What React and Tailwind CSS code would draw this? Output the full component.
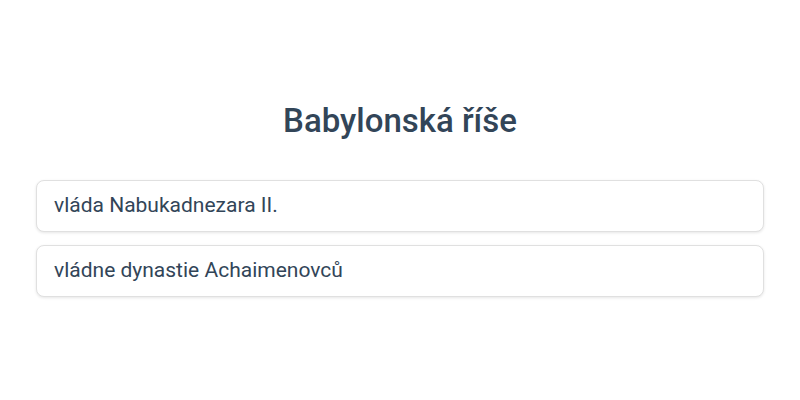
export default function App() {
  const items = ["vláda Nabukadnezara II.", "vládne dynastie Achaimenovců"];
  return (
    <div
      className="min-h-[400px] bg-white px-9 pt-[98px] text-[#324558]"
      style={{ fontFamily: "Roboto, 'Liberation Sans', sans-serif" }}
    >
      <h1 className="mb-[36px] text-center text-[33px] font-medium leading-[46px]">Babylonská říše</h1>
      <div className="flex flex-col gap-[13px]">
        {items.map((t) => (
          <div
            key={t}
            className="flex h-[52px] items-center rounded-lg border border-[#e0e0e0] bg-white px-[17px] text-[21px] shadow-[0_1px_3px_rgba(0,0,0,0.1)]"
          >
            {t}
          </div>
        ))}
      </div>
    </div>
  );
}
